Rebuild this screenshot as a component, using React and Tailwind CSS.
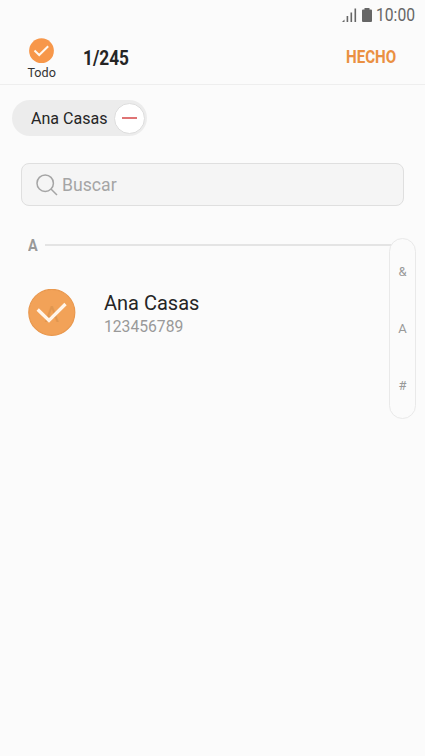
import React from "react";

function StatusBar() {
  return (
    <div className="flex h-[30px] items-center justify-end pr-[10px] text-[#666666]">
      <svg className="mr-[5px] h-[14px] w-[15px]" viewBox="0 0 15 14" fill="currentColor">
        <path d="M0 14L2.5 11.5V14Z" />
        <rect x="4.6" y="8" width="1.6" height="6" />
        <rect x="8.5" y="4.5" width="1.6" height="9.5" />
        <rect x="12.5" y="0.5" width="1.6" height="13.5" />
      </svg>
      <svg className="mr-[4px] h-[14px] w-[10px]" viewBox="0 0 10 14" fill="currentColor">
        <path d="M2.5 0h5v1.5H9a1 1 0 0 1 1 1V13a1 1 0 0 1-1 1H1a1 1 0 0 1-1-1V2.5a1 1 0 0 1 1-1h1.500Z" />
      </svg>
      <span className="w-[39px] origin-left scale-x-[0.87] whitespace-nowrap text-[18px] leading-[30px]">10:00</span>
    </div>
  );
}

function Header() {
  return (
    <header className="flex h-[55px] border-b border-[#eeeeee]">
      <div className="ml-[21px] flex w-[41px] flex-col items-center pt-2">
        <svg className="h-[26px] w-[26px] shrink-0" viewBox="0 0 26 26">
          <circle cx="12.500" cy="12.700" r="12.400" fill="#f7974a" />
          <path d="M5.500 12.600L10.200 17L19.200 8.300" fill="none" stroke="#fff8ef" strokeWidth="2" />
        </svg>
        <span className="origin-center scale-x-[0.97] text-[13px] leading-[17px] text-[#333333]">Todo</span>
      </div>
      <h1 className="ml-[21px] origin-left scale-x-[0.885] text-[19.500px] font-bold leading-[57px] text-[#252525]">1/245</h1>
      <button className="ml-auto mr-[28px] w-[51px] origin-left scale-x-[0.865] text-left text-[17.500px] font-bold leading-[54px] text-[#ea9042]">HECHO</button>
    </header>
  );
}

function SelectedChip() {
  return (
    <div className="ml-3 mt-[15px] flex h-9 w-[135px] items-center rounded-full bg-[#ececec] pl-[18.500px]">
      <span className="mt-[2px] w-[83.500px] origin-left scale-x-[0.945] whitespace-nowrap text-[17px] text-[#252525]">Ana Casas</span>
      <span className="flex h-[31px] w-[31px] items-center justify-center rounded-full border border-[#dddddd] bg-white">
        <span className="h-[2px] w-[15px] bg-[#df7475]" />
      </span>
    </div>
  );
}

function SearchField() {
  return (
    <div className="ml-[21px] mt-[27px] flex h-[43px] w-[383px] items-center rounded-[8px] border border-[#dfdfdf] bg-[#f5f5f5] pl-[14px] text-[#a5a5a5]">
      <svg className="mr-[4px] h-[22px] w-[22px]" viewBox="0 0 22 22" fill="none" stroke="currentColor" strokeWidth="1.500">
        <circle cx="9.200" cy="9.200" r="8.200" />
        <path d="M15 15L21 21" />
      </svg>
      <span className="origin-left scale-x-[0.98] text-[18px]">Buscar</span>
    </div>
  );
}

function ContactList() {
  return (
    <section className="relative mt-[32px]">
      <div className="flex h-[16px] items-center pl-[28px]">
        <span className="w-[17px] origin-left scale-x-[0.9] text-[16px] font-bold text-[#999999]">A</span>
        <span className="mb-[2px] mr-[33px] h-[2px] flex-1 bg-[#e4e4e4]" />
      </div>
      <div className="mt-[35px] flex items-start pl-[28px]">
        <svg className="h-[48px] w-[48px]" viewBox="0 0 48 48">
          <circle cx="23.800" cy="23.400" r="23" fill="#f2a258" stroke="#e9984e" strokeWidth="1.200" />
          <text x="23.800" y="32.500" textAnchor="middle" fontSize="22" fill="#e0964f">A</text>
          <path d="M9.700 20.500L21 31.500L37.500 15" fill="none" stroke="#fff5eb" strokeWidth="3.300" />
        </svg>
        <div className="ml-[28px]">
          <p className="text-[20px] leading-[28px] text-[#252525]">Ana Casas</p>
          <p className="origin-left scale-x-[0.98] text-[16px] leading-5 text-[#999999]">123456789</p>
        </div>
      </div>
      <nav className="absolute right-[9px] top-0 flex h-[181px] w-[27px] flex-col items-center justify-between rounded-full border border-[#e9e9e9] bg-[#fbfbfb] pb-[22px] pt-[23px] text-[13px] leading-5 text-[#999999]">
        <span>&amp;</span>
        <span>A</span>
        <span>#</span>
      </nav>
    </section>
  );
}

export default function App() {
  return (
    <main className="h-[756px] w-[425px] overflow-hidden bg-[#fbfbfb] font-['Roboto',sans-serif]">
      <StatusBar />
      <Header />
      <SelectedChip />
      <SearchField />
      <ContactList />
    </main>
  );
}
